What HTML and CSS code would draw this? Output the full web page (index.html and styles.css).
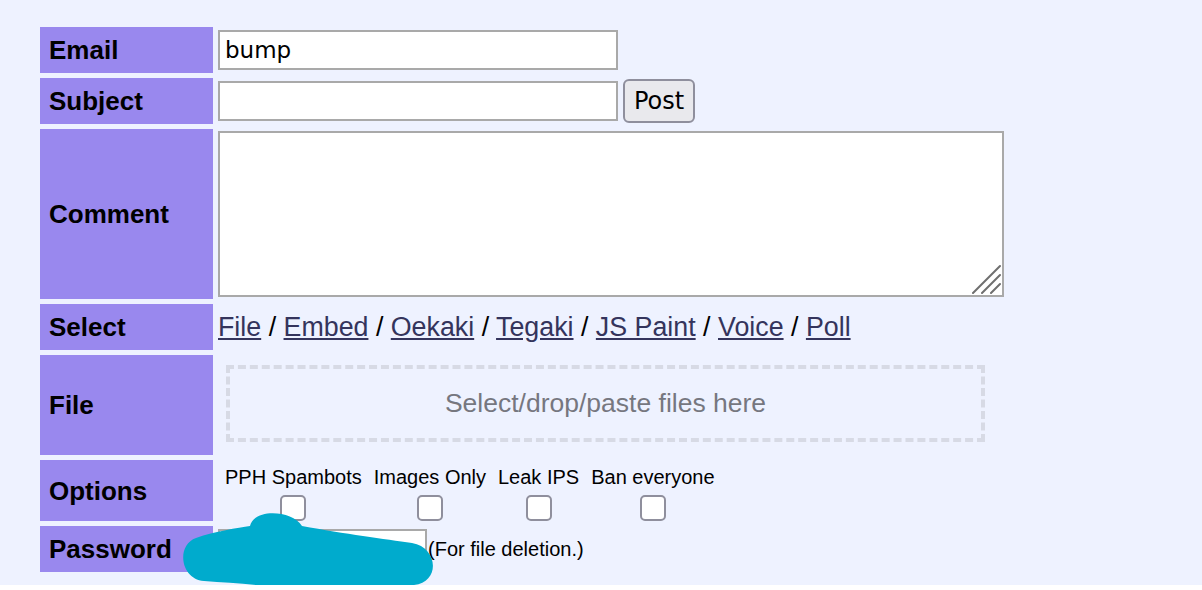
FILE: index.html
```html
<!DOCTYPE html>
<html lang="en">

<head>
  <meta charset="UTF-8">
  <meta name="viewport" content="width=device-width, initial-scale=1.0">
  <title>Post form</title>
  <link rel="stylesheet" href="styles.css">
</head>

<body>
  <div class="page">
    <form class="post-form">
      <table>
        <tr>
          <th>Email</th>
          <td><input type="text" class="field" value="bump"></td>
        </tr>
        <tr>
          <th>Subject</th>
          <td class="subject-cell">
            <input type="text" class="field">
            <button type="button" class="post">Post</button>
          </td>
        </tr>
        <tr>
          <th>Comment</th>
          <td>
            <div class="comment-wrap">
              <textarea class="comment"></textarea>
              <svg class="grip" width="30" height="30" viewBox="0 0 30 30">
                <path d="M2,29 L29,2 M11,29 L29,11 M20,29 L29,20" stroke="#6f6f6f" stroke-width="2" stroke-linecap="round" />
              </svg>
            </div>
          </td>
        </tr>
        <tr>
          <th>Select</th>
          <td class="select-cell">
            <a href="#">File</a> / <a href="#">Embed</a> / <a href="#">Oekaki</a> / <a href="#">Tegaki</a> /
            <a href="#">JS Paint</a> / <a href="#">Voice</a> / <a href="#">Poll</a>
          </td>
        </tr>
        <tr>
          <th>File</th>
          <td><div class="dropzone">Select/drop/paste files here</div></td>
        </tr>
        <tr>
          <th>Options</th>
          <td class="options-cell">
            <div class="options">
              <label class="option">PPH Spambots<input type="checkbox"></label>
              <label class="option">Images Only<input type="checkbox"></label>
              <label class="option">Leak IPS<input type="checkbox"></label>
              <label class="option">Ban everyone<input type="checkbox"></label>
            </div>
          </td>
        </tr>
        <tr>
          <th>Password</th>
          <td class="password-cell">
            <input type="password" class="password">
            <span class="hint">(For file deletion.)</span>
          </td>
        </tr>
      </table>
    </form>

    <!-- redaction scribble over the password field -->
    <svg class="scribble" width="270" height="95" viewBox="175 505 270 95">
      <path d="M 196,538 C 215,531 238,528 250,526 C 254,508 292,510 302,526 C 345,534 385,539 412,543
               C 438,547 441,582 414,585 C 390,589 366,594 342,591 C 300,589 250,584 204,581
               C 180,579 176,545 196,538 Z" fill="#00abcd" />
    </svg>
  </div>
</body>

</html>
```

FILE: styles.css
```css
* {
  box-sizing: border-box;
}

html,
body {
  margin: 0;
  padding: 0;
  background-color: #ffffff;
}

body {
  font-family: "Liberation Sans", Arial, sans-serif;
  font-size: 20px;
  color: #000000;
}

.page {
  position: relative;
  background-color: #eef2ff;
  padding: 22px 0 8px 35px;
}

.post-form table {
  border-spacing: 5px;
  margin: 0;
}

.post-form th {
  background-color: #9988ee;
  width: 173px;
  padding: 8px 9px;
  text-align: left;
  font-size: 26px;
  font-weight: bold;
  line-height: 30px;
  vertical-align: middle;
}

.post-form td {
  padding: 0;
  vertical-align: middle;
}

.field {
  display: block;
  width: 400px;
  height: 40px;
  border: 2px solid #a9a9a9;
  padding: 0 5px;
  font-family: "DejaVu Sans", Tahoma, sans-serif;
  font-size: 23px;
  color: #000000;
  background: #ffffff;
}

.subject-cell {
  display: flex;
  align-items: center;
  gap: 5px;
  height: 46px;
}

.post {
  height: 44px;
  width: 72px;
  background-color: #e9e9ed;
  border: 2px solid #8f8f9d;
  border-radius: 6px;
  font-family: "DejaVu Sans", Tahoma, sans-serif;
  font-size: 24px;
  color: #000000;
  padding: 0;
}

.comment-wrap {
  position: relative;
  width: 786px;
  margin: 2px 0;
}

.comment {
  display: block;
  width: 786px;
  height: 166px;
  border: 2px solid #a9a9a9;
  background: #ffffff;
  resize: none;
}

.grip {
  position: absolute;
  right: 3px;
  bottom: 3px;
}

.select-cell {
  font-size: 26.8px;
}

.select-cell a {
  color: #34345c;
  text-decoration: underline;
}

.dropzone {
  width: 759px;
  height: 77px;
  margin: 10px 0 13px 8px;
  border: 4px dashed #d7dae5;
  display: flex;
  align-items: center;
  justify-content: center;
  font-size: 26.5px;
  color: #76777f;
}

.options-cell {
  vertical-align: top !important;
}

.options {
  display: flex;
  gap: 12px;
  padding: 6px 0 0 7px;
}

.option {
  display: flex;
  flex-direction: column;
  align-items: center;
  font-size: 20px;
  line-height: 23px;
}

.option input {
  appearance: none;
  width: 26px;
  height: 26px;
  margin: 6px 0 0;
  border: 2px solid #8f8f9d;
  border-radius: 5px;
  background: #ffffff;
}

.password-cell {
  display: flex;
  align-items: center;
  height: 46px;
}

.password {
  width: 209px;
  height: 41px;
  border: 2px solid #a9a9a9;
  background: #ffffff;
  margin: 0 1px 0 0;
}

.hint {
  font-size: 20px;
}

.scribble {
  position: absolute;
  left: 175px;
  top: 505px;
  overflow: visible;
}
```
